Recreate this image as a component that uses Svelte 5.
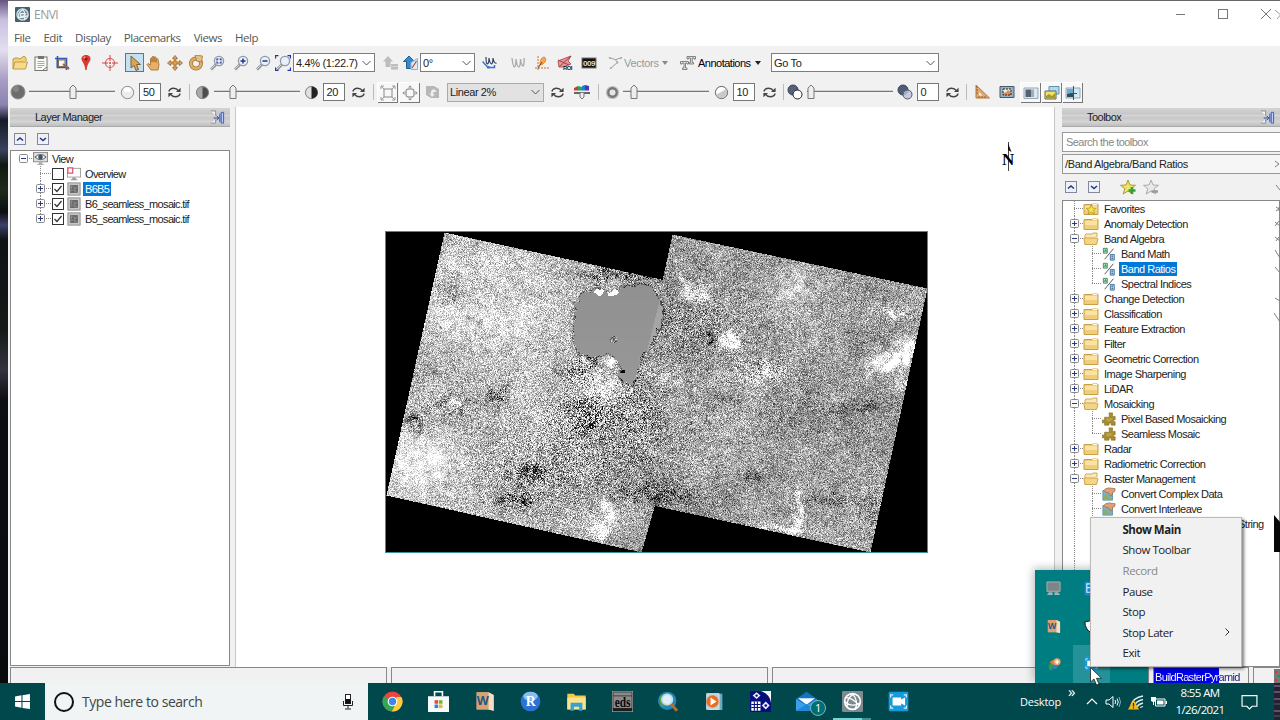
<script>
  import { onMount } from 'svelte';

  const menus = ['File', 'Edit', 'Display', 'Placemarks', 'Views', 'Help'];

  const mainTools = ['open', 'paste', 'chip', 'pin', 'cross', 'select', 'hand', 'move', 'rotate', 'zoomBox', 'zoomIn', 'zoomOut', 'zoomFit'];
  const roiTools = ['signal', 'signalOff', 'scatter', 'roi', 'counter'];

  const layers = [
    { name: 'Overview', icon: 'overview' },
    { name: 'B6B5', icon: 'raster', checked: true, selected: true },
    { name: 'B6_seamless_mosaic.tif', icon: 'raster', checked: true },
    { name: 'B5_seamless_mosaic.tif', icon: 'raster', checked: true },
  ];

  const tools = [
    { name: 'Favorites', icon: 'favFolder', leaf: true },
    { name: 'Anomaly Detection' },
    { name: 'Band Algebra', open: true, icon: 'bandMath', items: ['Band Math', 'Band Ratios', 'Spectral Indices'] },
    { name: 'Change Detection' },
    { name: 'Classification' },
    { name: 'Feature Extraction' },
    { name: 'Filter' },
    { name: 'Geometric Correction' },
    { name: 'Image Sharpening' },
    { name: 'LiDAR' },
    { name: 'Mosaicking', open: true, icon: 'puzzle', items: ['Pixel Based Mosaicking', 'Seamless Mosaic'] },
    { name: 'Radar' },
    { name: 'Radiometric Correction' },
    { name: 'Raster Management', open: true, icon: 'convert', items: ['Convert Complex Data', 'Convert Interleave'] },
  ];
  const selectedTool = 'Band Ratios';

  const contextItems = [
    { label: 'Show Main', bold: true },
    { label: 'Show Toolbar' },
    { label: 'Record', disabled: true },
    { label: 'Pause' },
    { label: 'Stop' },
    { label: 'Stop Later', sub: true },
    { label: 'Exit' },
  ];

  const apps = ['chrome', 'store', 'wbook', 'rlang', 'explorer', 'eds', 'globe', 'player', 'grid', 'mail', 'envi', 'zoom'];

  const lens = '<path d="M2 14.5 7 9.5" stroke="#8d949c" stroke-width="2.6"/><path d="M2 14 6.500 9.500" stroke="#d5d9de"/><circle cx="10" cy="6" r="4.600" fill="#e8f0fa" stroke="#8f98a5" stroke-width="1.300"/>';
  const folder = '<path d="M1 3.500V13.500H15V3.500L14 2.500H10L9 3.500Z" fill="#f0cd78" stroke="#c9a048"/><path d="M2 5H14V9H2Z" fill="#f9e3a6"/><path d="M10 2.500H14V4H10Z" fill="#fff"/>';
  const star = 'M8 1 10 6 15.500 6.300 11.200 9.600 12.800 15 8 12 3.200 15 4.800 9.600 .5 6.300 6 6Z';
  const wbook = '<path d="M2 1 11 1 15 3V15L11 14 2 14Z" fill="#e2b48b"/><path d="M11 1 15 3V15L11 14Z" fill="#f6ddc4"/><path d="M2 1H11V14H2Z" fill="#d9a273"/><text x="6.400" y="11" text-anchor="middle" font-size="9.500" font-weight="bold" fill="#1d5a86">W</text>';

  const icons = {
    envi: '<rect width="16" height="16" rx="1" fill="#7d8a90"/><circle cx="8" cy="8" r="6" fill="none" stroke="#fff" stroke-width="1.200"/><path d="M2 8Q7 13 14 9M8 2Q13 8 10 14M9 2Q3 6 4 12M3 5Q8 5 13 11" fill="none" stroke="#fff"/>',
    enviTitle: '<rect width="16" height="16" rx="1" fill="#44606c"/><circle cx="8" cy="8" r="6" fill="#75909c" stroke="#dce8ec" stroke-width="1.300"/><path d="M3 11Q8 12 14 9M8 2Q12 7 10 14M8 3Q3 6 4 11M6 7H11L9 10H6Z" fill="none" stroke="#eaf4f8" stroke-width="1.200"/>',
    open: '<path d="M1 14V4L3 3H6L8 4 12 1 14 3V6" fill="#f1d276" stroke="#bd9644"/><path d="M1 14 3 7H15.500L13.500 14Z" fill="#f5dc8d" stroke="#c49a45"/>',
    paste: '<rect x="2" y="2" width="12" height="13.500" fill="#fbfbf8" stroke="#77736a"/><path d="M5 1H11V4H5Z" fill="#73766f"/><path d="M4.500 6.500H11.500M4.500 8.500H11.500M4.500 10.500H11.500M4.500 12.500H9" stroke="#a9aaa5"/><path d="M10 15 14 12" stroke="#777"/>',
    chip: '<path d="M2 3H12V13H2Z" fill="#a9c6ef"/><path d="M3.500 1V12.500H15M1 3.500H12.500V15" fill="none" stroke="#315ab0" stroke-width="1.600"/><path d="M4.500 5H11V11.500H4.500Z" fill="#f6f8fc" stroke="#8d6a42"/><path d="M9 9 15 14" stroke="#9a6a3a" stroke-width="2"/>',
    pin: '<path d="M8 0C4.500 0 3 2.500 3.600 4.800C4.200 7 7 9 7.300 15H8.700C9 9 11.800 7 12.400 4.800C13 2.500 11.500 0 8 0Z" fill="#d93a34"/><circle cx="8" cy="4" r="1.400" fill="#7f1717"/><circle cx="6.500" cy="2.500" r="1" fill="#f8a29a"/>',
    cross: '<circle cx="8" cy="8" r="4.500" fill="none" stroke="#df5a57" stroke-width="1.200"/><path d="M8 0V6M8 10V16M0 8H6M10 8H16" stroke="#d64542"/><path d="M8 7V9M7 8H9" stroke="#d64542"/>',
    select: '<path d="M4 1V13L7 10.500 9 15.500 11.500 14.500 9.500 9.500H13.500Z" fill="#dba45b" stroke="#85602f"/>',
    hand: '<path d="M5 15 1 9.500 2 8.500 4.500 10V3.500Q5.200 2.500 6 3.500V7V2Q7 .8 8 2V7V2.200Q9 1.200 10 2.500V7.500V4Q11.200 3 12 4.200L13 10 12 15Z" fill="#e6b06c" stroke="#a87231" stroke-width=".9"/>',
    move: '<path d="M8 .5 10.500 3.500H9V7H12.500V5.500L15.500 8 12.500 10.500V9H9V12.500H10.500L8 15.500 5.500 12.500H7V9H3.500V10.500L.5 8 3.500 5.500V7H7V3.500H5.500Z" fill="#dfa150" stroke="#95672b" stroke-width=".8"/>',
    rotate: '<circle cx="8" cy="8.500" r="5" fill="none" stroke="#9d6f30" stroke-width="4"/><circle cx="8" cy="8.500" r="5" fill="none" stroke="#dfad67" stroke-width="2.600"/><path d="M7 0 14.500 1 13.500 7 8.500 6Z" fill="#e8bd80" stroke="#9b6c2d" stroke-width=".7"/>',
    zoomBox: lens + '<path d="M8 5.500V4H9.500M10.500 4H12V5.500M12 6.500V8H10.500M9.500 8H8V6.500" fill="none" stroke="#23348f" stroke-width="1.200"/>',
    zoomIn: lens + '<path d="M7.500 6H12.500M10 3.500V8.500" stroke="#20319a" stroke-width="1.500"/>',
    zoomOut: lens + '<path d="M7.500 6H12.500" stroke="#20319a" stroke-width="1.500"/>',
    zoomFit: lens + '<path d="M.5 3.500V.5H3.500M12.500.5H15.500V3.500M.5 12.500V15.500H3.500M12.500 15.500H15.500V12.500" fill="none" stroke="#2531b4" stroke-width="1.300"/>',
    upOff: '<path d="M5 1 10 6.500H7.500V12H2.500V6.500H0Z" fill="#bdbdbd"/><path d="M8 9H15V15H8Z" fill="#d3d3d3"/><path d="M8 10H15M8 13H15" stroke="#aaa"/>',
    upOn: '<path d="M6 1 11.500 6.500H8.500V13.500H3.500V6.500H.5Z" fill="#3889c6" stroke="#1f5f95"/><path d="M8 7.500 14.500 3.500V14.500H8Z" fill="#d9ecfa" stroke="#88b4d4"/><path d="M9 13 13.500 6" stroke="#c44c33" stroke-width="1.300"/>',
    signal: '<path d="M4 2Q4 9 5.500 9Q7 8 7 3Q8 9 9.500 9Q11 8 11 3Q12 9 14.500 8" fill="none" stroke="#34405d" stroke-width="1.200"/><path d="M.5 6.500 6 12.500M6.500 12.500H12.500V10" fill="none" stroke="#3876cb" stroke-width="1.500"/><path d="M5 11H7.500V13.500H5Z" fill="#3876cb"/>',
    signalOff: '<path d="M2 3Q3 12 4.500 12Q6 11 6 4Q7 12 9 12Q10.500 11 10.500 4Q11.500 11 13 11Q14.500 10 14 3" fill="none" stroke="#ababab" stroke-width="1.400"/>',
    scatter: '<path d="M4 1V15M1 13H15" stroke="#d26e2d" stroke-dasharray="2 1"/><path d="M6 10Q6 3 10 2Q13 3 11 7Q9 10 6 10Z" fill="#f4a65d" stroke="#e28b31"/><path d="M4 13 8 7" stroke="#7d3b12"/>',
    roi: '<path d="M1 6 6 4 14 1 11 6 14 9 6 12 2 12Z" fill="#e8969b" stroke="#b3565c"/><path d="M1 5 12 10M14 1 2 12" stroke="#a83e45"/><text x="6" y="15" font-size="6" font-weight="bold" fill="#222" textLength="9" lengthAdjust="spacingAndGlyphs">ROI</text>',
    counter: '<rect x="1" y="3" width="14" height="10" fill="#111" stroke="#777"/><text x="8" y="11" text-anchor="middle" font-size="8" font-weight="bold" fill="#ddd" textLength="12" lengthAdjust="spacingAndGlyphs">009</text>',
    vectors: '<path d="M2 3 8 5 14 3M8 5 10 8 3 14" fill="none" stroke="#999"/><path d="M1 2H3V4H1ZM13 2H15V4H13ZM9 7H11V9H9ZM2 13H4V15H2Z" fill="#aaa"/>',
    annot: '<path d="M.5 6.500H8.500V9H7V8H5.500V13H7V14.500H2.500V13H4V8H2V9H.5Z" fill="#eee" stroke="#777" stroke-width=".9"/><path d="M7 1.500H15.500V4H14V3H12.300V7.500H13.500V9H9.500V7.500H10.500V3H8.500V4H7Z" fill="#e2e2e2" stroke="#777" stroke-width=".9"/>',
    dark: '<circle cx="8" cy="8" r="7" fill="#6d6d6d" stroke="#8f8f8f"/><circle cx="6" cy="5" r="3" fill="#858585"/>',
    light: '<circle cx="8" cy="8" r="6.600" fill="#ececec" stroke="#858585"/><ellipse cx="8" cy="5" rx="4" ry="2.500" fill="#fff"/>',
    contrastLo: '<circle cx="8" cy="8" r="6.500" fill="#a9a9a9" stroke="#777"/><path d="M8 2A6 6 0 0 1 8 14Z" fill="#4b4b50"/>',
    contrastHi: '<circle cx="8" cy="8" r="6.500" fill="#e0e0e0" stroke="#777"/><path d="M8 1.500A6.500 6.500 0 0 1 8 14.500Z" fill="#222"/>',
    refresh: '<path d="M2 7Q3 3.500 7 3.500Q10.500 3.500 12 6M14 9Q13 12.500 9 12.500Q5.500 12.500 4 10" fill="none" stroke="#444" stroke-width="1.500"/><path d="M14.500 3V7.500H9.500ZM1.500 13V8.500H6.500Z" fill="#444"/>',
    extent: '<path d="M4 4H12V12H4Z" fill="none" stroke="#888"/><path d="M1 4V1H4M12 1H15V4M15 12V15H12M4 15H1V12M1 1 4 4M15 1 12 4M15 15 12 12M1 15 4 12" fill="none" stroke="#999"/>',
    extentAll: '<rect x="4" y="4" width="8" height="8" rx="2" fill="none" stroke="#777"/><path d="M6 2.500 8 .5 10 2.500ZM6 13.500 8 15.500 10 13.500ZM2.500 6 .5 8 2.500 10ZM13.500 6 15.500 8 13.500 10Z" fill="#888"/>',
    stretchOff: '<path d="M1 2H9L14 5V14H6L1 11Z" fill="#b7b7b7"/><path d="M9 5Q5 6 6 10L4 9 7 13 10 10 8 10Q8 7 12 8" fill="#eee"/>',
    histogram: '<path d="M0 6.500V4L4 2V6.500Z" fill="#d23b34"/><path d="M4 6.500V2L8 3V6.500Z" fill="#27a657"/><path d="M8 6.500V2L11 1V6.500Z" fill="#2a7bd0"/><path d="M11 6.500V1L15 2V6.500Z" fill="#4939b9"/><path d="M0 9H16" stroke="#666" stroke-width="2"/><path d="M6 8.500V13L8 15 10 13V8.500Z" fill="#eee" stroke="#777"/>',
    sharpLo: '<circle cx="8" cy="8" r="7" fill="#bdbdbd"/><circle cx="8" cy="8" r="4.500" fill="#e5e5e5" stroke="#777" stroke-width="2.500"/>',
    sharpHi: '<circle cx="8" cy="8" r="6.500" fill="#fff" stroke="#555"/><path d="M2 10Q8 8 13 4Q16 9 11 13Q6 16 2 10Z" fill="#c9c9c9"/>',
    opaque: '<circle cx="6" cy="6" r="5" fill="#56627a" stroke="#39445b"/><circle cx="10.500" cy="10.500" r="4.500" fill="#fff" stroke="#222"/>',
    transp: '<circle cx="6" cy="6" r="5" fill="#4e5c76" stroke="#39445b"/><circle cx="10.500" cy="10.500" r="4.500" fill="#b9c3d8" fill-opacity=".8" stroke="#556"/>',
    ruler: '<path d="M2 1V14H15.500Z" fill="#dfa873" stroke="#b8783b"/><path d="M5 8V11.500H8.500Z" fill="#f2f2f2"/><path d="M2 3H4M2 6H4M2 9H4M5 14V12M8 14V12M11 14V12" stroke="#95602e"/>',
    shot: '<path d="M1 2.500H15V13.500H1Z" fill="#8fb5cc" stroke="#4e5560"/><path d="M4 5H12V11H4Z" fill="#d98c5f"/><path d="M4 5H12V8L9 6 6 9 4 8Z" fill="#f5ead5"/><path d="M4 5H12V11H4Z" fill="none" stroke="#222" stroke-dasharray="2 1"/>',
    flat: '<path d="M1 3H15V13.500H1Z" fill="#dce9f2" stroke="#97a9b6"/><path d="M2.500 4.500H8V12H2.500Z" fill="#566171"/><path d="M8 4.500H11V12H8Z" fill="#a0adb7"/>',
    blend: '<path d="M5 1.500H15V9H5Z" fill="#b1d9ec" stroke="#5f91b0"/><path d="M1 6H12V14H1Z" fill="#f1e168" stroke="#5d665a"/><path d="M2 11 5 9 8 11 11 8V13H2Z" fill="#a59931"/>',
    swipe: '<path d="M1 3H15V13H1Z" fill="#d5e7f2" stroke="#8ea8ba"/><path d="M2 4H8V9L2 10Z" fill="#68add6"/><path d="M2 9 8 8V12H2Z" fill="#354d4f"/><path d="M8.500 1V15M5 8.500H12" stroke="#234f9c"/>',
    dock: '<path d="M1 1H6V6M6 10V14H1" fill="#f6f6f6" stroke="#8a8a8a"/><path d="M4 8.500H9M7 6 9.500 8.500 7 11M10.500 4V13" fill="none" stroke="#2343b4"/><path d="M12 2.500H14.500V14H12Z" fill="#b9cdf8" stroke="#315bd0"/>',
    up: '<rect x=".5" y=".5" width="11" height="11" fill="#eef2f8" stroke="#83889a"/><path d="M3 7.500 6 5 9 7.500" fill="none" stroke="#253684" stroke-width="1.600"/>',
    down: '<rect x=".5" y=".5" width="11" height="11" fill="#eef2f8" stroke="#83889a"/><path d="M3 5 6 7.500 9 5" fill="none" stroke="#253684" stroke-width="1.600"/>',
    view: '<rect x=".5" y="1.500" width="15" height="10" fill="#ddd" stroke="#888"/><path d="M6 12H10V14H12V15H4V14H6Z" fill="#aaa"/><path d="M2 6.500Q8 1 14 6.500Q8 12 2 6.500Z" fill="#f5f5f5" stroke="#555"/><circle cx="8" cy="6.500" r="2.500" fill="#35566b"/>',
    overview: '<rect x=".5" y="1.500" width="15" height="10" fill="#fff" stroke="#999"/><path d="M6 12H10V14H12V15H4V14H6Z" fill="#999"/><rect x="1" y="1" width="5.500" height="6" fill="#fff" stroke="#e05a79" stroke-width="1.500"/>',
    raster: '<rect x="1" y="1" width="14" height="14" fill="#c7c7c7" stroke="#888"/><path d="M3.500 3.500H12.500V12.500H3.500Z" fill="#666"/><path d="M3 7 6 5 9 8 12 6M3 11 7 9 12 12M5 3V9M9 5V12" stroke="#8f8f8f" fill="none"/>',
    folder,
    openFolder: '<path d="M2 13.500V4L3 3H9L10 2H14V6" fill="#f8e8b7" stroke="#d0aa59"/><path d="M.8 7H14L15 8 13.500 13.500H2Z" fill="#f4d487" stroke="#d0a552"/>',
    favFolder: folder + '<path transform="translate(2.800 3) scale(.68)" d="' + star + '" fill="#f8e545" stroke="#a68926"/>',
    favAdd: '<path d="' + star + '" fill="#f1e264" stroke="#a99c3b"/><path d="M12 8V15M8.500 11.500H15.500" stroke="#2ca436" stroke-width="2.600"/>',
    favDel: '<path d="' + star + '" fill="#e9e9e9" stroke="#aaa"/><path d="M8.500 12.500H15" stroke="#999" stroke-width="2.500"/>',
    bandMath: '<path d="M1.500 1.500H6V7H1.500Z" fill="#b9e3c5" stroke="#3d8153"/><path d="M3 5.500 4 3 5 5.500" stroke="#184" fill="none"/><path d="M3 14 13 2" stroke="#444"/><path d="M9.500 8.500H14V15H9.500Z" fill="#abd1ed" stroke="#346b99"/><path d="M11 10.500H12.500M11 13H12.500" stroke="#246"/>',
    puzzle: '<path d="M8 1H12V3.500L11.500 5H15V9L13 8.500V11.500L15 11V15H10.500V12.500H8V15H3V12L.5 12.500V9L3 9.500V6H8.500Z" fill="#a88c30" stroke="#8d7426" stroke-width=".8"/><path d="M5 7H12V9L7 11 5 10Z" fill="#bfa243"/>',
    convert: '<path d="M1 4H12V15H1Z" fill="#7bb3cf" stroke="#5d93ad"/><path d="M2 10 5 8 9 13 11 11V14H2Z" fill="#8cae68"/><path d="M2 4 4 2 8 1 15 2 14.500 5 12 6.500 11 10H9L8 7 4 6Z" fill="#dca274" stroke="#99653c" stroke-width=".8"/>',
    win: '<path d="M1 3.200 7 2.200V7.500H1ZM8 2.100 15 1V7.500H8ZM1 8.500H7V13.800L1 12.800ZM8 8.500H15V15L8 14Z" fill="#fff"/>',
    mic: '<rect x="5.500" y=".5" width="5" height="9" fill="#fff" stroke="#222"/><path d="M5.500 5H10.500V9.500H5.500Z" fill="#111"/><path d="M3.500 7V11.500H12.500V7M8 12V14.500M5 15H11" fill="none" stroke="#222"/>',
    chrome: '<circle cx="8" cy="8" r="7.600" fill="#e8473c"/><path d="M8 8 1.500 4A7.600 7.600 0 0 0 7.500 15.600L11 9Z" fill="#35a753"/><path d="M11 4.500H14.800A7.600 7.600 0 0 1 7.500 15.600L11 9Z" fill="#fbcf3b"/><circle cx="8" cy="8" r="3.700" fill="#fff"/><circle cx="8" cy="8" r="2.800" fill="#4284ee"/>',
    store: '<path d="M5 4V.6H11V4" fill="none" stroke="#fff" stroke-width="1.200"/><path d="M0 4H16V16H0Z" fill="#f7fafa"/><path d="M5 7H7.700V9.700H5Z" fill="#e54b31"/><path d="M8.300 7H11V9.700H8.300Z" fill="#76b32b"/><path d="M5 10.300H7.700V13H5Z" fill="#278dd2"/><path d="M8.300 10.300H11V13H8.300Z" fill="#f4b524"/>',
    wbook,
    rlang: '<circle cx="8" cy="8" r="7.500" fill="#2b72d4"/><ellipse cx="8" cy="4" rx="5.500" ry="3.500" fill="#87bdf5"/><text x="8" y="11.500" text-anchor="middle" font-family="Liberation Serif" font-size="10.500" font-weight="bold" fill="#fff">R</text>',
    explorer: '<path d="M1 2H6L7 3.500H15V14H1Z" fill="#f3c94c"/><path d="M1 5H15V14H1Z" fill="#fbe38b"/><path d="M3.500 9H12.500V15H10V12H6V15H3.500Z" fill="#36a1d4"/>',
    eds: '<rect width="16" height="16" fill="#1c1c1c" stroke="#aaa"/><path d="M1 1H15V3.500H1Z" fill="#8a8a8a"/><path d="M1 4H15V13H1Z" fill="#8b8b8b"/><text x="2" y="12" font-family="Liberation Serif" font-size="11" font-weight="bold" letter-spacing="0" fill="#080808" textLength="12" lengthAdjust="spacingAndGlyphs">eds</text>',
    globe: '<circle cx="7" cy="7.500" r="7" fill="#2288b9"/><path d="M1 5Q6 0 9 2L6 5 5 12 2 11Z" fill="#51a64b"/><path d="M9 9 14.500 15" stroke="#b66b35" stroke-width="2.300"/><circle cx="7" cy="6.500" r="4" fill="#daf3fa" stroke="#cbd9e2" stroke-width="1.300"/>',
    player: '<path d="M4 2H14V14.500H4Z" fill="#6ea8bf"/><path d="M2 2H11.500V14H2Z" fill="#bdd3dd" stroke="#e5eff3" stroke-width=".6"/><circle cx="6.500" cy="8" r="4.700" fill="#ec6c22"/><path d="M5 5 9.500 8 5 11Z" fill="#fff"/>',
    grid: '<path d="M0 0H16V16H0Z" fill="#05107c"/><path d="M8 0Q15 2 16 9V0Z" fill="#f7f7ff"/><path d="M1 8H8V15H1Z" fill="#fff"/><path d="M1 10.300H8M1 12.600H8M3.300 8V15M5.600 8V15" stroke="#05107c" stroke-width=".8"/><path d="M5 1 8 3.500 5 6 2 3.500ZM12 8 15 11 12 14 9 11Z" fill="#e7e8ff"/><circle cx="12" cy="11" r="1" fill="#05107c"/><circle cx="5" cy="3.500" r=".9" fill="#05107c"/>',
    mail: '<path d="M0 6 8 .5 16 6V15H0Z" fill="#1672c5"/><path d="M1.500 5.500H14.500L8 10.500Z" fill="#f5fbff"/><path d="M0 6 8 11 16 6V15H0Z" fill="#3ba0e7"/><path d="M0 15 8 10 16 15Z" fill="#1e87d9"/>',
    zoom: '<rect x=".5" y=".5" width="15" height="15" rx="1" fill="#159bdb"/><path d="M3.500 5H10V6.500L13 5V11L10 9.500V11H3.500Z" fill="#fff"/><path d="M2 5V3H4M12 3H14V5M14 11V13H12M4 13H2V11" fill="none" stroke="#d4f2ff" stroke-width=".9"/>',
    speaker: '<path d="M1 6H4L8 2.500V13.500L4 10H1Z" fill="none" stroke="#fff"/><path d="M10 6Q11.500 8 10 10M12 4.500Q14.500 8 12 11.500" fill="none" stroke="#fff"/><path d="M14 3Q17 8 14 13" fill="none" stroke="#8bb0b3"/>',
    wifi: '<path d="M3 11Q5 4 15 2M6 12Q8 7 15 5.500M9 13Q10.500 10 15 9M12 13.500 15 12.500" fill="none" stroke="#dfeaea" stroke-width="1.300"/><path d="M5.500 5.500 11 15.500H0Z" fill="#f3b71b"/><path d="M5.500 9V12.500M5.500 13.300V14.500" stroke="#3a2c00" stroke-width="1.200"/>',
    battery: '<path d="M4.500 5H14V12H4.500Z" fill="none" stroke="#fff"/><path d="M6 6.500H12.500V10.500H6ZM14.500 7H16V10H14.500Z" fill="#fff"/><path d="M0 3H5V7L3 8V11H2V8L0 7Z" fill="#fff"/>',
    note: '<path d="M1 2.500H15V12.500H10.500L8 15 5.500 12.500H1Z" fill="none" stroke="#fff" stroke-width="1.100"/>',
    device: '<path d="M1 1H15V11H1Z" fill="#7d8588" stroke="#a6b2b5"/><path d="M1 15 3 12H7V15ZM9 12H13L15 15H9Z" fill="#a8b1b3"/>',
    swirl: '<path d="M3 15Q0 10 5 6L8 9Q5 12 6 15Z" fill="#2d9b54"/><path d="M3 6Q8 1 13 4L8 10Z" fill="#e47b32"/><path d="M6 14Q12 14 13 9L8 8Z" fill="#3c7cc4"/><circle cx="11.500" cy="5.500" r="4" fill="#f1a36b"/><path d="M11.500 3V8M9 5.500H14" stroke="#fff" stroke-width="1.500"/>',
    bluetile: '<rect x=".5" y=".5" width="15" height="15" rx="2" fill="#1688cc"/><path d="M3 3H11V12H3ZM7 3V12M3 7H11" fill="none" stroke="#d5efff" stroke-width="1.200"/>',
    shield: '<path d="M8 1Q12 3 15 3Q15 11 8 15Q1 11 1 3Q5 3 8 1Z" fill="#fff" stroke="#111"/><path d="M8 2V14M2 7H14" stroke="#fff"/>',
  };

  // Image canvas, in pixels of the 541x320 scene
  const left = [[58, 0], [330, 59], [255, 320], [0, 263]];
  const right = [[286, 2], [541, 56], [484, 320], [229, 265]];
  const lake = [[196, 61], [211, 56], [224, 61], [234, 55], [254, 52], [264, 54], [271, 65], [277, 78], [274, 93], [266, 110], [257, 120], [251, 136], [246, 153], [239, 150], [232, 143], [236, 136], [227, 123], [221, 120], [207, 125], [192, 120], [187, 108], [189, 83], [190, 70]];

  // x, y, radius x, radius y, brightness, contrast
  const patches = [
    [84, 78, 65, 40, 0.08, 0], [34, 232, 36, 26, 0.24, -0.05], [130, 40, 90, 30, 0.08, 0],
    [95, 95, 50, 26, 0.12, -0.02], [68, 58, 20, 15, -0.25, 0.05], [27, 189, 12, 10, -0.45, 0.1],
    [64, 174, 18, 12, -0.26, 0.08], [68, 172, 6, 5, 0.6, 0], [108, 163, 12, 8, -0.25, 0.12],
    [144, 243, 22, 11, -0.38, 0.15], [128, 268, 20, 10, -0.38, 0.15], [204, 180, 28, 18, -0.15, 0.25],
    [207, 190, 11, 7, -0.25, 0.15], [213, 156, 22, 12, 0.36, 0.05], [199, 130, 7, 7, 0.5, 0],
    [228, 129, 7, 7, 0.5, 0], [190, 140, 16, 10, -0.25, 0.25], [205, 125, 6, 10, -0.35, 0.1],
    [219, 280, 4, 18, 0.5, 0], [213, 298, 8, 9, 0.45, 0.1], [231, 42, 40, 7, -0.32, 0.15],
    [190, 225, 75, 45, -0.06, 0.12], [409, 58, 28, 26, 0.2, -0.02], [311, 60, 12, 6, 0.4, 0.06],
    [299, 48, 6, 8, 0.3, 0], [344, 110, 8, 5, 0.6, 0.05], [506, 129, 20, 10, 0.75, 0.05],
    [522, 118, 12, 9, 0.7, 0], [515, 155, 10, 6, 0.4, 0.05], [375, 140, 24, 11, 0.2, 0.18],
    [412, 275, 6, 26, 0.32, 0.04], [400, 296, 28, 4, 0.45, 0.05], [508, 80, 22, 6, 0.28, 0.06],
    [470, 175, 28, 4, -0.25, 0.04], [365, 243, 20, 4, -0.24, 0.04], [445, 266, 22, 4, -0.2, 0.1],
    [275, 262, 38, 8, -0.25, 0.12], [322, 106, 4, 3, -0.7, 0], [310, 95, 55, 32, -0.02, 0.08],
    [325, 190, 50, 45, 0.07, 0.02], [405, 180, 40, 18, -0.06, 0.02], [500, 280, 25, 25, 0, 0.1],
    [253, 180, 20, 38, -0.1, 0.15], [535, 210, 8, 50, 0.15, 0], [275, 140, 22, 10, 0.18, 0.04],
  ];

  let scene;

  function inside(poly, x, y) {
    let hit = false;
    for (let i = 0, j = poly.length - 1; i < poly.length; j = i++) {
      const [xi, yi] = poly[i];
      const [xj, yj] = poly[j];
      if (yi > y !== yj > y && x < ((xj - xi) * (y - yi)) / (yj - yi) + xi) hit = !hit;
    }
    return hit;
  }

  function hash(x, y) {
    let n = Math.imul(x, 374761393) + Math.imul(y, 668265263);
    n = Math.imul(n ^ (n >>> 13), 1274126177);
    return ((n ^ (n >>> 16)) >>> 0) / 4294967296;
  }

  function smooth(x, y, size) {
    const gx = Math.floor(x / size);
    const gy = Math.floor(y / size);
    const fx = x / size - gx;
    const fy = y / size - gy;
    const top = hash(gx, gy) * (1 - fx) + hash(gx + 1, gy) * fx;
    const bottom = hash(gx, gy + 1) * (1 - fx) + hash(gx + 1, gy + 1) * fx;
    return top * (1 - fy) + bottom * fy - 0.5;
  }

  onMount(() => {
    const ctx = scene.getContext('2d');
    const image = ctx.createImageData(541, 320);
    for (let y = 0; y < 320; y++) {
      for (let x = 0; x < 541; x++) {
        let v = 0;
        if (inside(left, x, y) || inside(right, x, y)) {
          const wobble = smooth(x + 90, y, 3) * 4;
          if (inside(lake, x + wobble, y + wobble) && Math.hypot(x - 227, (y - 107) * 1.2) > 4) {
            v = 0.55 + y * 0.0003 + (x + (y - 80) * 0.25 > 270 ? 0.07 : 0);
            if (Math.hypot(x - 226, y - 57) < 6 + wobble || Math.hypot(x - 213, y - 59) < 4 + wobble) v = 0.98;
            if (Math.hypot(x - 235, (y - 139) * 2) < 4) v = 0.02;
          } else {
            const warm = Math.min(1, Math.max(0, (x - 150) / 130));
            let mean = 0.76 - warm * 0.14;
            let spread = 0.19 - warm * 0.015;
            // breaks up the outlines of the patches
            const rough = 0.8 + smooth(x, y, 5) * 1.5;
            const jx = x + smooth(x, y + 300, 8) * 14;
            const jy = y + smooth(x + 300, y, 8) * 14;
            for (const [px, py, rx, ry, dm, ds] of patches) {
              const d = ((jx - px) / rx) ** 2 + ((jy - py) / ry) ** 2;
              if (d < 5) {
                mean += dm * rough * Math.exp(-d);
                spread += ds * Math.exp(-d);
              }
            }
            if (inside(lake, x + 2, y) || inside(lake, x - 2, y) || inside(lake, x, y + 2) || inside(lake, x, y - 2)) mean -= 0.2;
            mean += smooth(x, y, 28) * 0.1 + smooth(x + 50, y, 10) * 0.1 + smooth(x, y + 90, 4) * 0.12;
            const n = hash(x, y) + hash(x + 700, y) + hash(x, y + 700) - 1.5;
            v = mean + n * spread * 1.7;
          }
        }
        const i = (y * 541 + x) * 4;
        image.data[i] = image.data[i + 1] = image.data[i + 2] = v * 255;
        image.data[i + 3] = 255;
      }
    }
    ctx.putImageData(image, 0, 0);
  });
</script>

{#snippet icon(name, size = 16, box = 16)}
  <svg class="icon" width={size} height={size} viewBox="0 0 {box} {box}">{@html icons[name]}</svg>
{/snippet}

{#snippet slider(value)}
  <svg class="slider" width="86" height="18" viewBox="0 0 86 18">
    <path d="M0 8.500H86" stroke="#777" stroke-width="1.500" />
    <path d="M0 9.800H86" stroke="#fff" />
    <path d="M{value - 3} 15.500V5L{value} 2 {value + 3} 5V15.500Z" fill="#eee" stroke="#777" />
  </svg>
{/snippet}

{#snippet chevron()}
  <svg width="9" height="6" viewBox="0 0 9 6"><path d="M.5 1 4.500 5 8.500 1" fill="none" stroke="#555" /></svg>
{/snippet}

{#snippet branch(kind, width, x, last = false)}
  <svg class="branch" {width} height="15" viewBox="0 0 {width} 15">
    {#if kind !== 'root'}
      <path d="M{x}.5 0V{last ? 8 : 15}" stroke="#888" stroke-dasharray="1 1" />
    {/if}
    {#if kind !== 'line'}
      <path d="M{x} 7.500H{width}" stroke="#888" stroke-dasharray="1 1" />
    {/if}
    {#if kind === 'plus' || kind === 'minus' || kind === 'root'}
      <rect x={x - 3.5} y="3.500" width="8" height="8" rx="1" fill="#fafafa" stroke="#8b8b8b" />
      <path d="M{x - 2} 7.500H{x + 3}" stroke="#2c3a78" />
    {/if}
    {#if kind === 'plus'}
      <path d="M{x}.5 5V10" stroke="#2c3a78" />
    {/if}
  </svg>
{/snippet}

<div class="screen">
  <div class="wallpaper"></div>

  <div class="window">
    <header class="titlebar">
      {@render icon('enviTitle', 15)}
      <span class="title">ENVI</span>
      <svg width="108" height="12" viewBox="0 0 108 12">
        <path d="M1 6.500H10" stroke="#777" />
        <rect x="43.500" y="1.500" width="9" height="9" fill="none" stroke="#777" />
        <path d="M86 1 96 11M96 1 86 11" stroke="#777" />
        <path d="M100 2 108 9M108 4 102 11" stroke="#999" />
      </svg>
    </header>

    <nav class="menubar">
      {#each menus as menu}
        <span>{menu}</span>
      {/each}
    </nav>

    <div class="toolbar main-tools">
      {#each mainTools as tool}
        <span class="tool" class:active={tool === 'select'}>{@render icon(tool)}</span>
      {/each}
      <div class="combo">4.4% (1:22.7){@render chevron()}</div>
      <span class="tool rot">{@render icon('upOff')}</span>
      <span class="tool">{@render icon('upOn')}</span>
      <div class="combo">0°{@render chevron()}</div>
      {#each roiTools as tool}
        <span class="tool">{@render icon(tool)}</span>
      {/each}
      <span class="drop off">{@render icon('vectors', 15)}Vectors<i></i></span>
      <span class="drop">{@render icon('annot')}<b>Annotations</b><i></i></span>
      <div class="combo">Go To{@render chevron()}</div>
    </div>

    <div class="toolbar display-tools">
      <span class="tool">{@render icon('dark')}</span>
      {@render slider(44)}
      <span class="tool">{@render icon('light', 15)}</span>
      <span class="field">50</span>
      <span class="tool">{@render icon('refresh', 15)}</span>
      <span class="sep"></span>
      <span class="tool">{@render icon('contrastLo', 15)}</span>
      {@render slider(19)}
      <span class="tool">{@render icon('contrastHi', 15)}</span>
      <span class="field">20</span>
      <span class="tool">{@render icon('refresh', 15)}</span>
      <span class="sep"></span>
      <span class="tool raised">{@render icon('extent')}</span>
      <span class="tool raised">{@render icon('extentAll')}</span>
      <span class="tool">{@render icon('stretchOff')}</span>
      <div class="combo gray">Linear 2%{@render chevron()}</div>
      <span class="tool">{@render icon('refresh', 15)}</span>
      <span class="tool">{@render icon('histogram')}</span>
      <span class="sep"></span>
      <span class="tool">{@render icon('sharpLo', 15)}</span>
      {@render slider(11)}
      <span class="tool">{@render icon('sharpHi', 15)}</span>
      <span class="field">10</span>
      <span class="tool">{@render icon('refresh', 15)}</span>
      <span class="sep"></span>
      <span class="tool">{@render icon('opaque')}</span>
      {@render slider(4)}
      <span class="tool">{@render icon('transp')}</span>
      <span class="field">0</span>
      <span class="tool">{@render icon('refresh', 15)}</span>
      <span class="sep"></span>
      <span class="tool">{@render icon('ruler')}</span>
      <span class="tool">{@render icon('shot')}</span>
      <span class="tool raised">{@render icon('flat')}</span>
      <span class="tool raised">{@render icon('blend')}</span>
      <span class="tool raised">{@render icon('swipe')}</span>
    </div>

    <main class="work">
      <aside class="panel">
        <h2 class="panel-title">Layer Manager{@render icon('dock', 15)}</h2>
        <div class="panel-buttons">
          {@render icon('up', 12, 12)}
          {@render icon('down', 12, 12)}
        </div>
        <div class="tree layers">
          <div class="node">
            {@render branch('root', 22, 12)}
            {@render icon('view', 15)}
            <span class="label">View</span>
          </div>
          {#each layers as layer, i}
            <div class="node child">
              {@render branch(layer.checked ? 'plus' : 'leaf', 22, 10, i === layers.length - 1)}
              <svg width="12" height="12" viewBox="0 0 12 12">
                <rect x=".5" y=".5" width="11" height="11" fill="#fff" stroke="#333" />
                {#if layer.checked}<path d="M2.500 6 5 8.500 9.500 3" fill="none" stroke="#333" stroke-width="1.200" />{/if}
              </svg>
              {@render icon(layer.icon, 14)}
              <span class="label" class:selected={layer.selected}>{layer.name}</span>
            </div>
          {/each}
        </div>
      </aside>

      <section class="view">
        <svg class="north" width="14" height="30" viewBox="0 0 14 30">
          <path d="M7.500 0V29" stroke="#444" />
          <path d="M7 1 10.500 10 7 8Z" fill="#111" />
          <text x="7" y="22.500" text-anchor="middle">N</text>
        </svg>
        <canvas bind:this={scene} width="541" height="320"></canvas>
      </section>

      <aside class="panel toolbox">
        <h2 class="panel-title">Toolbox{@render icon('dock', 15)}</h2>
        <div class="search">Search the toolbox</div>
        <div class="path">/Band Algebra/Band Ratios</div>
        <div class="panel-buttons">
          {@render icon('up', 12, 12)}
          {@render icon('down', 12, 12)}
          <span class="stars">{@render icon('favAdd', 16)}{@render icon('favDel', 16)}</span>
        </div>
        <div class="tree">
          {#each tools as tool}
            <div class="node">
              {@render branch(tool.leaf ? 'leaf' : tool.open ? 'minus' : 'plus', 20, 11)}
              {@render icon(tool.icon && tool.leaf ? tool.icon : tool.open ? 'openFolder' : 'folder')}
              <span class="label">{tool.name}</span>
            </div>
            {#each tool.items ?? [] as item, i}
              <div class="node">
                {@render branch('line', 20, 11)}
                {@render branch('leaf', 19, 9, tool.name !== 'Raster Management' && i === tool.items.length - 1)}
                {@render icon(tool.icon, 14)}
                <span class="label" class:selected={item === selectedTool}>{item}</span>
              </div>
            {/each}
          {/each}
          <div class="node">
            {@render branch('line', 20, 11)}
            <span class="label tail">String</span>
          </div>
          {#each Array(9) as _}
            <div class="node">{@render branch('line', 20, 11)}</div>
          {/each}
        </div>
      </aside>
    </main>

    <footer class="status">
      <span></span>
      <span></span>
      <span></span>
      <span class="progress"><em>BuildRasterPyramid</em></span>
      <span></span>
    </footer>
  </div>

  <svg class="edge" width="6" height="720" viewBox="0 0 6 720">
    <path d="M0 515 6 522V552H0Z" fill="#080808" />
    <path d="M1 161 5 164 1 167M2 185 6 190M2 207 5 209 2 211M5 207V211M1 222 6 226M1 226 5 221M1 237 6 241M2 241 5 237M1 250 6 258M1 267 6 273M1 298 6 301M0 313 6 322" fill="none" stroke="#827b86" />
    <path d="M0 669H6V683H0Z" fill="#777" />
    <path d="M1 671H3V673H1ZM1 679H3V681H1Z" fill="#d33" />
    <path d="M4 675H6V677H4Z" fill="#292" />
    <path d="M0 683H6V720H0Z" fill="#271f31" />
    <path d="M0 686H6M0 692H6M0 699H6M0 711H6" stroke="#9385a2" />
    <path d="M0 704H6M0 716H6" stroke="#3a6d68" />
  </svg>

  <div class="tray">
    <span>{@render icon('device', 15)}</span>
    <span>{@render icon('bluetile', 15)}</span>
    <span></span>
    <span>{@render icon('wbook', 15)}</span>
    <span>{@render icon('shield', 15)}</span>
    <span></span>
    <span>{@render icon('swirl', 14)}</span>
    <span class="hover">{@render icon('zoom', 15)}</span>
    <span></span>
  </div>

  <ul class="context">
    {#each contextItems as item}
      <li class:bold={item.bold} class:disabled={item.disabled}>
        {item.label}
        {#if item.sub}
          <svg width="5" height="8" viewBox="0 0 5 8"><path d="M.5.5 4 4 .5 7.500" fill="none" stroke="#333" /></svg>
        {/if}
      </li>
    {/each}
  </ul>

  <footer class="taskbar">
    <span class="start">{@render icon('win', 17)}</span>
    <div class="find">
      <span class="cortana"></span>
      <span class="hint">Type here to search</span>
      {@render icon('mic')}
    </div>
    <div class="apps">
      {#each apps as app}
        <span class="app" class:running={app === 'envi'}>
          {@render icon(app, 21)}
          {#if app === 'mail'}<sup>1</sup>{/if}
        </span>
      {/each}
    </div>
    <div class="system">
      <span class="desktop">Desktop</span>
      <span class="more">»</span>
      <svg width="12" height="7" viewBox="0 0 12 7"><path d="M1 6 6 1 11 6" fill="none" stroke="#fff" stroke-width="1.200" /></svg>
      {@render icon('speaker')}
      {@render icon('wifi')}
      {@render icon('battery')}
      <div class="clock"><span>8:55 AM</span><span>1/26/2021</span></div>
      {@render icon('note', 17)}
    </div>
  </footer>

  <svg class="cursor" width="12" height="19" viewBox="0 0 12 19">
    <path d="M.5.5V15L4 12 6.500 18 9 17 6.500 11.300H11.500Z" fill="#fff" stroke="#222" stroke-width=".8" />
  </svg>
</div>

<style>
  :global(body) {
    overflow: hidden;
  }

  .screen {
    position: relative;
    display: grid;
    grid-template: 683px 37px / 8px 1272px;
    width: 1280px;
    height: 720px;
    overflow: hidden;
    background: #f1f1f1;
    font-family: "Liberation Sans", Arial, sans-serif;
    font-size: 11px;
    letter-spacing: -0.5px;
    color: #222;
  }

  svg {
    flex: none;
    display: block;
  }

  .wallpaper {
    background: linear-gradient(#65527f 0, #c9c0df 20px, #e4def0 50px, #a89cc4 80px, #8d83b0 105px, #141a28 120px, #39425c 150px, #101812 165px, #1e2b1b 190px, #0b0d13 212px, #3c4068 225px, #0e1015 240px, #151a18 330px, #35313f 370px, #0d0e12 400px, #090a0c 683px);
  }

  .window {
    display: grid;
    grid-template-rows: 26px 19px 33px 28px 560px 16px;
    border-top: 1px solid #69676b;
    background: #f1f1f1;
    overflow: hidden;
  }

  .titlebar {
    display: flex;
    align-items: center;
    padding-left: 7px;
    background: #fff;
  }

  .title {
    flex: 1;
    margin-left: 4px;
    font: 12px "Open Sans", sans-serif;
    letter-spacing: -0.5px;
    color: #999;
  }

  .menubar {
    display: flex;
    align-items: center;
    gap: 13px;
    padding: 2px 0 0 6px;
    box-sizing: border-box;
    background: #fff;
    font: 11.500px/15px "Open Sans", sans-serif;
    letter-spacing: -0.45px;
    color: #555;
  }

  .toolbar {
    display: grid;
    align-items: center;
    align-content: center;
  }

  .main-tools {
    grid-template-columns: 22px 20px 22px 25px 24px 23px 18px 24px 18px 24px 24px 20px 20px 82px 27px 18px 55px 30px 25px 23px 24px 24px 79px 91px 168px;
    padding-left: 1px;
  }

  .display-tools {
    grid-template-columns: 20px 87px 24px 22px 27px 2px 24px 85px 24px 21px 28px 2px 26px 18px 29px 97px 27px 22px 10px 18px 90px 20px 25px 26px 2px 22px 88px 22px 23px 26px 2px 30px 19px 28px 14px 28px;
    justify-items: center;
    padding-bottom: 2px;
  }

  .tool {
    display: flex;
    align-items: center;
    justify-content: center;
    height: 20px;
  }

  .active {
    width: 19px;
    height: 19px;
    margin-left: 3px;
    border: 1px solid #3c7fb1;
    box-sizing: border-box;
    background: #c4e0f3;
  }

  .rot {
    padding-left: 4px;
  }

  .raised {
    width: 20px;
    background: #f8f8f8;
    border: solid #fff;
    border-width: 1px 0 0 1px;
    box-shadow: 1px 1px 0 #777;
    box-sizing: border-box;
  }

  .combo {
    display: flex;
    align-items: center;
    justify-content: space-between;
    height: 19px;
    padding: 0 3px 0 2px;
    border: 1px solid #7d7d7d;
    box-sizing: border-box;
    background: #fff;
    letter-spacing: -0.35px;
  }

  .gray {
    width: 97px;
    background: #e2e2e2;
    border-color: #aaa;
    letter-spacing: -0.4px;
  }

  .drop {
    display: flex;
    align-items: center;
    letter-spacing: -0.3px;
  }

  .drop b {
    font-weight: normal;
    letter-spacing: -0.5px;
    margin-left: 2px;
    color: #001;
  }

  .drop i {
    margin-left: 4px;
    border: 3.5px solid transparent;
    border-top: 4px solid #222;
    border-bottom: 0;
  }

  .off {
    gap: 1px;
    padding-left: 7px;
    color: #999;
  }

  .off i {
    margin-left: 2px;
    border-top-color: #888;
  }

  .field {
    width: 22px;
    height: 18px;
    padding-left: 3px;
    border: 1px solid #777;
    box-sizing: border-box;
    background: #fff;
    line-height: 16px;
    letter-spacing: -0.3px;
  }

  .sep {
    width: 1px;
    height: 16px;
    background: #bbb;
  }

  .work {
    display: grid;
    grid-template-columns: 222px 825px 225px;
  }

  .panel {
    display: flex;
    flex-direction: column;
    padding: 1px 0 1px 2px;
  }

  .panel-title {
    display: flex;
    align-items: center;
    justify-content: space-between;
    flex: none;
    height: 19px;
    margin: 0;
    padding: 0 5px 0 25px;
    box-sizing: border-box;
    border-bottom: 1px solid #aaa;
    background: linear-gradient(#d4d4d4, #c6c6c6 35%, #d9d9d9 38%, #c7c7c7 55%, #d4d4d4 75%, #bfbfbf);
    font-size: 11px;
    font-weight: normal;
    letter-spacing: -0.52px;
  }

  .panel-buttons {
    display: flex;
    align-items: center;
    gap: 11px;
    height: 23px;
    padding-left: 4px;
  }

  .tree {
    flex: 1;
    border: 1px solid #888;
    background: #fff;
    overflow: hidden;
  }

  .node {
    display: flex;
    align-items: center;
    height: 15px;
  }

  .label {
    height: 14px;
    margin-left: 2px;
    padding: 0 2px;
    line-height: 15px;
    white-space: nowrap;
  }

  .selected {
    background: #0078d7;
    color: #fff;
  }

  .layers .label {
    letter-spacing: -0.67px;
  }

  .child {
    padding-left: 19px;
  }

  .child .icon {
    margin-left: 3px;
  }

  .view {
    position: relative;
    margin-left: 5px;
    border: solid #c8c8c8;
    border-width: 0 1px;
    background: #fff;
  }

  .view canvas {
    display: block;
    margin: 124px 0 0 149px;
    border: 1px solid #35959a;
  }

  .north {
    position: absolute;
    left: 765px;
    top: 35px;
    font: bold 17px "Liberation Serif", serif;
  }

  .toolbox {
    padding: 1px 0 0 7px;
  }

  .search,
  .path {
    height: 20px;
    margin-top: 5px;
    padding-left: 3px;
    border: 1px solid #999;
    border-right: 0;
    box-sizing: border-box;
    background: #fff;
    line-height: 19px;
    letter-spacing: -0.55px;
    color: #888;
  }

  .path {
    margin-top: 2px;
    padding-left: 2px;
    background: #f6f6f6;
    letter-spacing: -0.37px;
    color: #222;
  }

  .toolbox .panel-buttons {
    height: 26px;
    padding-left: 3px;
  }

  .toolbox .label {
    margin-left: 3px;
  }

  .stars {
    display: flex;
    gap: 7px;
    margin-left: 9px;
  }

  .toolbox .tail {
    margin-left: 153px;
  }

  .status {
    display: grid;
    grid-template-columns: 377px 377px 377px 96px 30px;
    gap: 4px;
    padding-left: 2px;
  }

  .status span {
    border: 1px solid #888;
    border-bottom: 0;
  }

  .status .progress {
    padding: 1px 0 0 1px;
    background: linear-gradient(90deg, #0000e8 65px, #f1f1f1 0);
  }

  .progress em {
    display: block;
    font-style: normal;
    line-height: 16px;
    letter-spacing: -0.7px;
    background: linear-gradient(90deg, #fff 64px, #1a1a80 0);
    background-clip: text;
    color: transparent;
  }

  .edge {
    position: absolute;
    right: 0;
    top: 0;
    z-index: 3;
  }

  .tray {
    position: absolute;
    left: 1035px;
    top: 570px;
    display: grid;
    grid-template: repeat(3, 37.600px) / repeat(3, 37.500px);
    background: #007d80;
    box-shadow: -2px -2px 8px rgba(0, 0, 0, 0.25);
  }

  .tray span {
    display: flex;
    align-items: center;
    justify-content: center;
  }

  .tray .hover {
    background: #25929a;
  }

  .context {
    position: absolute;
    left: 1090px;
    top: 517px;
    width: 152px;
    height: 150px;
    margin: 0;
    padding: 1px 0 0;
    border: 1px solid #bbb;
    box-sizing: border-box;
    background: #f1f1f1;
    box-shadow: 2px 2px 3px rgba(0, 0, 0, 0.5);
    list-style: none;
    font: 11.500px "Open Sans", sans-serif;
    letter-spacing: -0.45px;
  }

  .context li {
    display: flex;
    align-items: center;
    justify-content: space-between;
    height: 20.600px;
    padding: 0 11px 0 31.500px;
  }

  .bold {
    font-weight: bold;
    letter-spacing: -0.5px;
  }

  .disabled {
    color: #888;
  }

  .taskbar {
    grid-column: 1 / 3;
    display: grid;
    grid-template-columns: 45px 323px 560px 1fr;
    background: #00484c;
    font-family: "Open Sans", sans-serif;
    color: #fff;
  }

  .start {
    display: grid;
    place-items: center;
  }

  .find {
    display: flex;
    align-items: center;
    padding: 0 12px 0 9px;
    background: #f0f4f4;
    color: #444;
  }

  .cortana {
    width: 20px;
    height: 20px;
    border: 2.5px solid #111;
    border-radius: 50%;
    box-sizing: border-box;
  }

  .hint {
    flex: 1;
    margin-left: 8px;
    font-size: 14px;
    letter-spacing: -0.45px;
  }

  .apps {
    display: grid;
    grid-template-columns: repeat(12, 46px);
    padding-left: 1px;
  }

  .app {
    position: relative;
    display: grid;
    place-items: center;
  }

  .running {
    margin: 0 4px;
    background: linear-gradient(90deg, #76d6d6 29px, #3e9194 0) bottom / 100% 2px no-repeat;
  }

  .app sup {
    position: absolute;
    left: 27px;
    top: 17px;
    width: 14px;
    height: 14px;
    border: 1px solid #7fb4b6;
    border-radius: 50%;
    background: #006f75;
    font-size: 11px;
    line-height: 14px;
    text-align: center;
  }

  .system {
    display: flex;
    align-items: center;
    gap: 7px;
    padding-left: 92px;
  }

  .desktop {
    width: 41px;
    font-size: 11px;
    letter-spacing: -0.2px;
  }

  .more {
    align-self: flex-start;
    width: 10px;
    margin-right: 1px;
    font-size: 15px;
    line-height: 16px;
  }

  .clock {
    display: flex;
    flex-direction: column;
    width: 52px;
    padding-bottom: 2px;
    text-align: center;
    font-size: 11.500px;
    line-height: 17px;
    letter-spacing: -0.6px;
  }

  .system .icon:last-child {
    margin-left: 8px;
  }

  .cursor {
    position: absolute;
    left: 1090px;
    top: 667px;
  }
</style>
